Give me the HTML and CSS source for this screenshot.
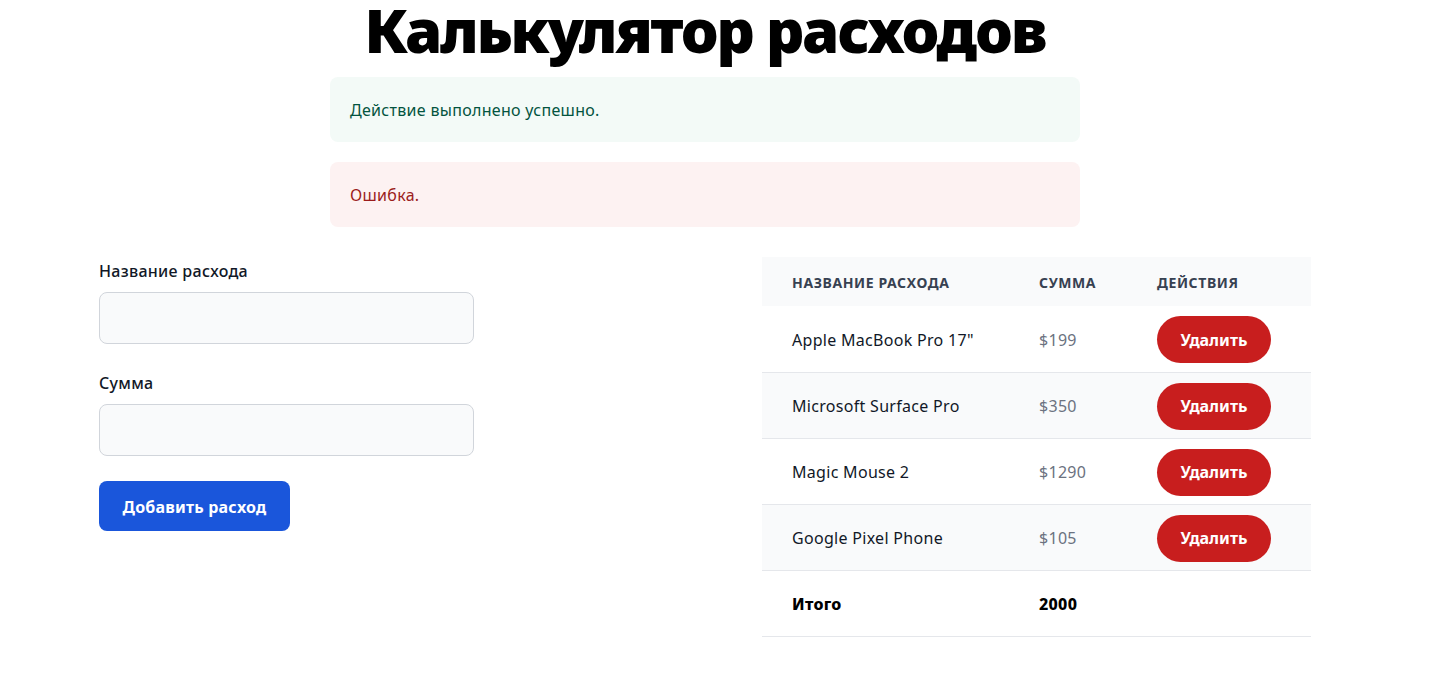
FILE: index.html
```html
<!DOCTYPE html>
<html lang="ru">
<head>
<meta charset="utf-8">
<title>Калькулятор расходов</title>
<link rel="stylesheet" href="styles.css">
</head>
<body>
<div class="page">
  <h1 class="title">Калькулятор расходов</h1>
  <div class="alert alert-success">Действие выполнено успешно.</div>
  <div class="alert alert-error">Ошибка.</div>
  <div class="main">
    <form class="form">
      <label class="label" for="name">Название расхода</label>
      <input class="input" id="name" type="text">
      <label class="label label-second" for="sum">Сумма</label>
      <input class="input" id="sum" type="text">
      <button class="btn-add" type="button">Добавить расход</button>
    </form>
    <table class="table">
      <colgroup>
        <col class="col-name">
        <col class="col-sum">
        <col class="col-act">
      </colgroup>
      <thead>
        <tr><th>Название расхода</th><th>Сумма</th><th>Действия</th></tr>
      </thead>
      <tbody>
        <tr><td class="name">Apple MacBook Pro 17"</td><td class="sum">$199</td><td><button class="btn-del" type="button">Удалить</button></td></tr>
        <tr class="alt"><td class="name">Microsoft Surface Pro</td><td class="sum">$350</td><td><button class="btn-del" type="button">Удалить</button></td></tr>
        <tr><td class="name">Magic Mouse 2</td><td class="sum">$1290</td><td><button class="btn-del" type="button">Удалить</button></td></tr>
        <tr class="alt"><td class="name">Google Pixel Phone</td><td class="sum">$105</td><td><button class="btn-del" type="button">Удалить</button></td></tr>
        <tr class="total"><td>Итого</td><td>2000</td><td></td></tr>
      </tbody>
    </table>
  </div>
</div>
</body>
</html>
```
FILE: styles.css
```css
* { box-sizing: border-box; }
body {
  margin: 0;
  font-family: "Noto Sans", "Open Sans", sans-serif;
  color: #111827;
  background: #fff;
  letter-spacing: 0.3px;
}
.page { width: 1410px; }
.title {
  margin: 0;
  font-size: 60px;
  line-height: 60px;
  font-weight: 900;
  text-align: center;
  color: #000;
  letter-spacing: -2.2px;
}
.alert {
  width: 750px;
  margin: 17px auto 0;
  padding: 21px 20px 19px;
  border-radius: 8px;
  font-size: 16px;
  line-height: 25px;
}
.alert + .alert { margin-top: 20px; }
.alert-success { background: #f3faf7; color: #03543f; }
.alert-error { background: #fdf2f2; color: #9b1c1c; }
.main {
  display: flex;
  margin-top: 30px;
}
.form {
  width: 762px;
  padding-left: 99px;
  display: flex;
  flex-direction: column;
  align-items: flex-start;
}
.label {
  font-size: 16px;
  line-height: 24px;
  font-weight: 500;
  color: #111827;
  margin-top: 2px;
  margin-bottom: 9px;
}
.label-second { margin-top: 27px; }
.input {
  width: 375px;
  height: 52px;
  border: 1px solid #d1d5db;
  border-radius: 8px;
  background: #f9fafb;
  font: inherit;
}
.btn-add {
  margin-top: 25px;
  width: 191px;
  height: 50px;
  padding-top: 2px;
  border: 0;
  border-radius: 8px;
  background: #1a56db;
  color: #fff;
  font-family: inherit;
  font-size: 16px;
  font-weight: 700;
  letter-spacing: 0.2px;
}
.table {
  width: 549px;
  border-collapse: collapse;
  table-layout: fixed;
  font-size: 16px;
}
.col-name { width: 247px; }
.col-sum { width: 118px; }
.col-act { width: 184px; }
.table th {
  height: 49px;
  padding: 1px 0 0 30px;
  text-align: left;
  background: #f9fafb;
  color: #374151;
  font-size: 14px;
  font-weight: 700;
  text-transform: uppercase;
  letter-spacing: 0.6px;
}
.table td {
  height: 66px;
  padding: 2px 0 0 30px;
  border-bottom: 1px solid #e5e7eb;
  vertical-align: middle;
}
.table tr.alt td { background: #f9fafb; }
.name { color: #111827; }
.sum { color: #6b7280; }
.total td { font-weight: 800; color: #000; }
.btn-del {
  width: 114px;
  height: 47px;
  border: 0;
  border-radius: 24px;
  background: #c81e1e;
  color: #fff;
  font-family: inherit;
  font-size: 16px;
  font-weight: 700;
  display: block;
  margin-top: 0;
}
```
